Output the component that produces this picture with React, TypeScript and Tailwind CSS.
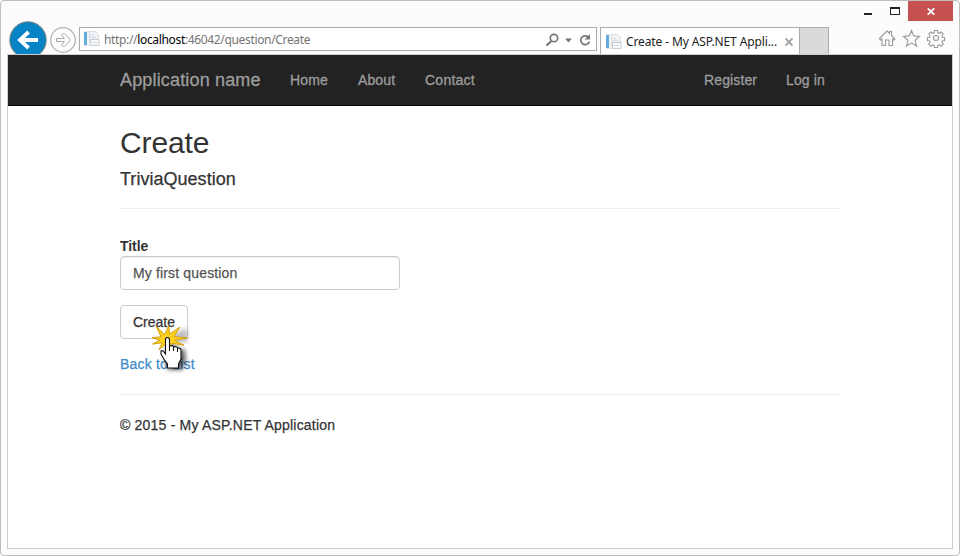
import React from "react";

const chromeFont = "font-['Noto_Sans','Open_Sans',sans-serif]";

function PageIcon() {
  return (
    <svg width="16" height="16" viewBox="0 0 16 16" className="shrink-0">
      <rect x="0.5" y="0.5" width="9" height="14" fill="#eff4f9" stroke="#e2e8ee" />
      <rect x="0" y="1" width="3" height="13" fill="#66aadb" />
      <path d="M5.500 .5h6l3 3v8h-9z" fill="#f0f3f6" stroke="#d9dee4" />
      <path d="M7 4.500h3M7 6.500h5" stroke="#d3dce6" />
      <rect x="6.500" y="8.500" width="8.500" height="6" fill="#f6f8fa" stroke="#c6ced8" />
      <path d="M8 11.500h5" stroke="#d5dce4" />
    </svg>
  );
}

function WindowButtons() {
  return (
    <div className="flex h-5 w-[113px]">
      <svg width="68" height="20" viewBox="0 0 68 20" shapeRendering="crispEdges">
        <path d="M24 13h8" stroke="#222" strokeWidth="2" />
        <rect x="50.500" y="6.500" width="9" height="7" fill="none" stroke="#222" />
        <path d="M50 7h10" stroke="#222" strokeWidth="2" />
      </svg>
      <div className="flex h-5 w-[45px] items-center justify-center bg-[#c75050]">
        <svg width="8" height="7" viewBox="0 0 8 7">
          <path d="M.7 .3l6.600 6.400M7.300 .3l-6.600 6.400" stroke="#fff" strokeWidth="1.700" />
        </svg>
      </div>
    </div>
  );
}

function BackForward() {
  return (
    <svg width="71" height="34" viewBox="8 20 71 34" className="shrink-0">
      <circle cx="28" cy="39" r="18.200" fill="#0784c6" stroke="#777d82" strokeWidth="1" />
      <path d="M38 39H20M28.500 31L20 39l8.500 8" fill="none" stroke="#fff" strokeWidth="3.800" />
      <circle cx="63" cy="39" r="12.300" fill="#fdfdfd" stroke="#b0b0b0" strokeWidth="1.200" />
      <path d="M56.500 37.500h8l-3-3.500 1.500-1.500h1.500l6 6.500-6 6.500H63L61.500 44l3-3.500h-8z" fill="none" stroke="#aaa" />
    </svg>
  );
}

function Toolbar() {
  return (
    <div className="flex h-[34px] pl-[7px]">
      <BackForward />
      <div className={`mt-[6px] flex h-6 w-[518px] items-center border border-[#ababab] bg-white pl-1 text-[12px] text-[#757575] ${chromeFont}`}>
        <PageIcon />
        <span className="ml-1 mt-px whitespace-nowrap tracking-[-0.34px]">
          http://<span className="text-black">localhost</span>:46042/question/Create
        </span>
        <svg width="50" height="22" viewBox="546 28 50 22" className="ml-auto shrink-0">
          <circle cx="554" cy="38" r="3.700" fill="none" stroke="#777" strokeWidth="1.700" />
          <path d="M551.500 41l-5 4.500" stroke="#777" strokeWidth="2.200" />
          <path d="M565 38.500h7l-3.500 4z" fill="#777" />
          <path d="M588.500 37.300A4.400 4.400 0 1 0 589.400 41.500" fill="none" stroke="#777" strokeWidth="1.800" />
          <path d="M590 34v5.500h-5.500z" fill="#777" />
        </svg>
      </div>
      <div className={`ml-[3px] mt-[6px] flex h-7 w-[200px] items-center border border-b-0 border-[#ababab] bg-white pl-[5px] text-[12px] text-[#222] ${chromeFont}`}>
        <PageIcon />
        <span className="ml-1 mt-px whitespace-nowrap tracking-[-0.11px]">Create - My ASP.NET Appli...</span>
        <svg width="8" height="8" viewBox="0 0 8 8" className="ml-auto mr-[6px] shrink-0">
          <path d="M.5 .5l7 7M7.500 .5l-7 7" stroke="#a0a0a0" strokeWidth="1.900" />
        </svg>
      </div>
      <div className="mt-[6px] h-7 w-[29px] border border-b-0 border-l-0 border-[#ababab] bg-[#dadada]" />
      <svg width="70" height="24" viewBox="876 26 70 24" className="ml-[47px] mt-[5px] shrink-0">
        <g fill="none" stroke="#999" strokeWidth="1.100">
          <path d="M879.500 38.500l7.500-7.500 2.500 2.500v-2h2v4l3.500 3.500-1 1-1.500-1v6.500H889v-5.500h-3.500v5.500H882v-6.500l-1.500 1z" />
          <path d="M911.500 30.500l2.200 5.400 5.800.5-4.400 3.900 1.400 5.700-5-3.100-5 3.100 1.400-5.700-4.400-3.900 5.800-.5z" />
          <circle cx="936" cy="38" r="2.500" />
          <path d="M934.500 30.500h3l.4 2.300 1.300.5 1.900-1.300 2.100 2.100-1.300 1.900.5 1.300 2.100.2v3l-2.100.4-.5 1.300 1.300 1.900-2.100 2.100-1.900-1.300-1.300.5-.4 2.100h-3l-.4-2.100-1.300-.5-1.900 1.300-2.100-2.100 1.300-1.900-.5-1.300-2.100-.4v-3l2.100-.2.5-1.300-1.300-1.900 2.100-2.100 1.900 1.300 1.300-.5z" />
        </g>
      </svg>
    </div>
  );
}

function Navbar() {
  return (
    <nav className="h-[51px] border-b border-[#080808] bg-[#222] px-28 text-[14px] text-[#9d9d9d] [-webkit-text-stroke:0.3px_currentColor]">
      <div className="flex h-[50px] items-center tracking-[0.12px]">
        <span className="mt-px w-[170px] whitespace-nowrap text-[18px] tracking-[0.16px]">Application name</span>
        <span className="w-[68px]">Home</span>
        <span className="w-[67px]">About</span>
        <span className="tracking-[0.25px]">Contact</span>
        <span className="ml-auto w-[82px]">Register</span>
        <span className="w-[54px]">Log in</span>
      </div>
    </nav>
  );
}

function ClickCursor() {
  return (
    <svg width="56" height="56" viewBox="146 320 56 56" className="pointer-events-none absolute left-[26px] top-[15px]">
      <defs>
        <filter id="soft" x="-50%" y="-50%" width="200%" height="200%">
          <feGaussianBlur stdDeviation="2" />
        </filter>
      </defs>
      <path d="M173 334l13-6 2 7-1 7-9 1-7-3z" fill="#000" opacity=".25" filter="url(#soft)" />
      <path d="M166 348l5-6 6 6 8 2 1 11-4 9h-14l-3-8z" fill="#000" opacity=".6" filter="url(#soft)" />
      <path
        d="M156 326l8.500 8.500 4.300-9 1 8.500 10.200-7-6 9.500 13.500 1.500-13 2.300 9.500 5-12-2-3 6-3.500-5-6.500 5.500 3-7-9.500 1.300 7.500-4-8-2.300 9-1z"
        fill="#fbd01f"
        stroke="#cf9a0c"
        strokeWidth=".9"
      />
      <path
        d="M165.500 354v-14q0-2.500 2-2.500t2 2.500v6q3.500-1 4 1 3.500-1 4 1 3.500-.5 3.500 3v8l-2.500 5v4h-11v-4l-3-4-3.500-6v-3q1.500-1.500 4.500 3z"
        fill="#fff"
        stroke="#111"
        strokeWidth="1.100"
      />
      <path d="M169.500 346v5M173.500 347v4M177.500 348v4" stroke="#111" />
    </svg>
  );
}

function CreatePage() {
  return (
    <main className="px-28 text-[14px] leading-5 text-[#333] [-webkit-text-stroke:0.25px_currentColor]">
      <h2 className="pt-5 text-[30px] leading-[33px] tracking-[-0.1px] [-webkit-text-stroke:0px]">Create</h2>
      <h4 className="mt-[10px] text-[18px] leading-5 tracking-[0.03px]">TriviaQuestion</h4>
      <hr className="mt-[19px] border-[#eee]" />
      <label className="mt-[27px] block pt-px text-[14px] font-bold leading-[19px] tracking-[-0.05px] [-webkit-text-stroke:0px]">Title</label>
      <input
        defaultValue="My first question"
        className="block h-[34px] w-[280px] rounded border border-[#ccc] px-3 tracking-[0.15px] text-[#555] shadow-[inset_0_1px_1px_rgba(0,0,0,0.075)] outline-none [-webkit-text-stroke:0.25px_currentColor]"
      />
      <div className="relative mt-[15px]">
        <button className="block h-[34px] w-[68px] rounded border border-[#ccc] bg-white">Create</button>
        <ClickCursor />
      </div>
      <a className="mt-[15px] block w-fit tracking-[0.2px] text-[#428bca]">Back to List</a>
      <hr className="mt-5 border-[#eee]" />
      <p className="mt-5 tracking-[0.2px]">© 2015 - My ASP.NET Application</p>
    </main>
  );
}

export default function App() {
  return (
    <div className="flex h-[556px] w-[960px] flex-col rounded border border-[#bdbdbd] bg-[#fcfcfc] font-['Liberation_Sans',Arial,sans-serif]">
      <div className="flex h-5 justify-end pr-[6px]">
        <WindowButtons />
      </div>
      <Toolbar />
      <div className="relative mx-[6px] -mt-px h-[495px] shrink-0 border border-[#ccc] bg-white">
        <Navbar />
        <CreatePage />
      </div>
    </div>
  );
}
